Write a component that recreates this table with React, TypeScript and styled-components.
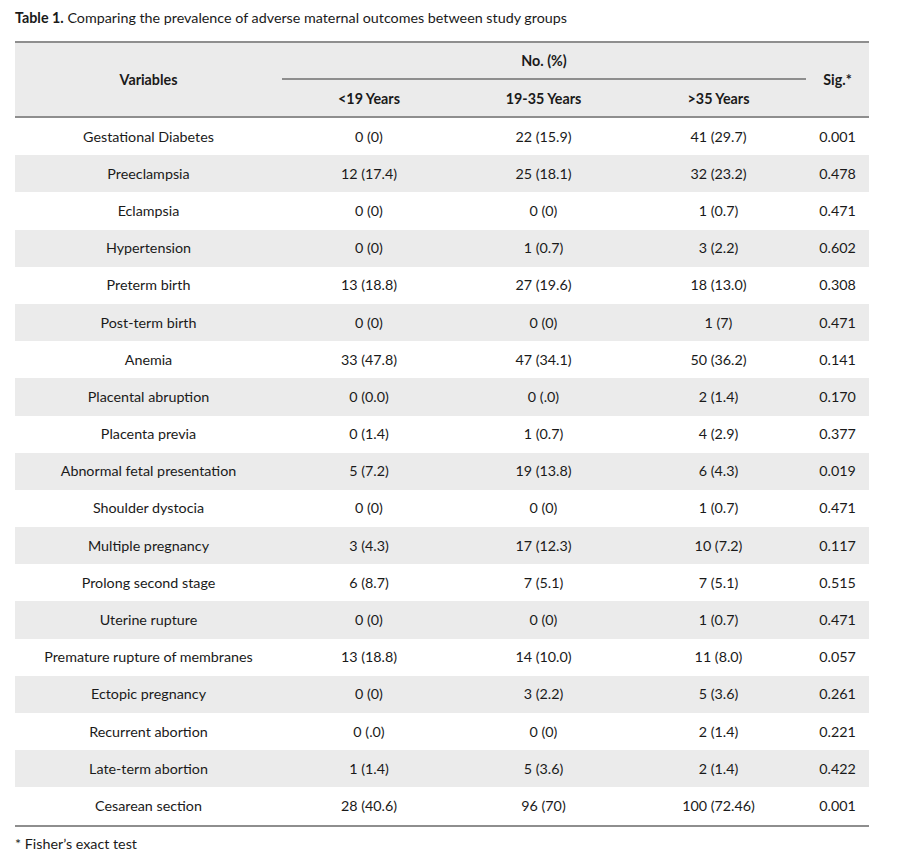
import React from 'react';
import styled, { createGlobalStyle } from 'styled-components';

const GlobalStyle = createGlobalStyle`
  body {
    margin: 0;
    background: #fff;
    font-family: Lato, "Open Sans", sans-serif;
    color: #1a1a1a;
  }
`;

const Page = styled.div`
  width: 900px;
  height: 860px;
  padding: 9px 31px 0 15px;
  box-sizing: border-box;
`;

const Caption = styled.div`
  font-size: 14.3px;
  line-height: 18px;
  margin-bottom: 14px;
`;

const CaptionLabel = styled.span`
  font-weight: 700;
`;

const Table = styled.table`
  width: 854px;
  border-collapse: collapse;
  table-layout: fixed;
  font-size: 14.3px;
  border-top: 2px solid #8e8e8e;
  border-bottom: 2px solid #8e8e8e;
`;

const Head = styled.thead`
  background: #ebebeb;
  border-bottom: 2px solid #8e8e8e;
`;

const HeadCell = styled.th<{ $rule?: boolean }>`
  font-weight: 700;
  text-align: center;
  padding: 0;
  height: ${(p) => (p.$rule ? '35px' : '36px')};
  border-bottom: ${(p) => (p.$rule ? '2px solid #8e8e8e' : 'none')};
`;

const Row = styled.tr<{ $shade: boolean }>`
  background: ${(p) => (p.$shade ? '#ebebeb' : '#fff')};
`;

const Cell = styled.td`
  text-align: center;
  padding: 0 0 1px;
  height: 36.2px;
`;

const Note = styled.div`
  font-size: 14.3px;
  line-height: 18px;
  margin-top: 8px;
`;

const rows: [string, string, string, string, string][] = [
  ['Gestational Diabetes', '0 (0)', '22 (15.9)', '41 (29.7)', '0.001'],
  ['Preeclampsia', '12 (17.4)', '25 (18.1)', '32 (23.2)', '0.478'],
  ['Eclampsia', '0 (0)', '0 (0)', '1 (0.7)', '0.471'],
  ['Hypertension', '0 (0)', '1 (0.7)', '3 (2.2)', '0.602'],
  ['Preterm birth', '13 (18.8)', '27 (19.6)', '18 (13.0)', '0.308'],
  ['Post-term birth', '0 (0)', '0 (0)', '1 (7)', '0.471'],
  ['Anemia', '33 (47.8)', '47 (34.1)', '50 (36.2)', '0.141'],
  ['Placental abruption', '0 (0.0)', '0 (.0)', '2 (1.4)', '0.170'],
  ['Placenta previa', '0 (1.4)', '1 (0.7)', '4 (2.9)', '0.377'],
  ['Abnormal fetal presentation', '5 (7.2)', '19 (13.8)', '6 (4.3)', '0.019'],
  ['Shoulder dystocia', '0 (0)', '0 (0)', '1 (0.7)', '0.471'],
  ['Multiple pregnancy', '3 (4.3)', '17 (12.3)', '10 (7.2)', '0.117'],
  ['Prolong second stage', '6 (8.7)', '7 (5.1)', '7 (5.1)', '0.515'],
  ['Uterine rupture', '0 (0)', '0 (0)', '1 (0.7)', '0.471'],
  ['Premature rupture of membranes', '13 (18.8)', '14 (10.0)', '11 (8.0)', '0.057'],
  ['Ectopic pregnancy', '0 (0)', '3 (2.2)', '5 (3.6)', '0.261'],
  ['Recurrent abortion', '0 (.0)', '0 (0)', '2 (1.4)', '0.221'],
  ['Late-term abortion', '1 (1.4)', '5 (3.6)', '2 (1.4)', '0.422'],
  ['Cesarean section', '28 (40.6)', '96 (70)', '100 (72.46)', '0.001'],
];

const App: React.FC = () => {
  return (
    <Page>
      <GlobalStyle />
      <Caption>
        <CaptionLabel>Table 1.</CaptionLabel> Comparing the prevalence of adverse maternal outcomes between study groups
      </Caption>
      <Table>
        <colgroup>
          <col style={{ width: 267 }} />
          <col style={{ width: 174 }} />
          <col style={{ width: 175 }} />
          <col style={{ width: 175 }} />
          <col style={{ width: 63 }} />
        </colgroup>
        <Head>
          <tr>
            <HeadCell rowSpan={2}>Variables</HeadCell>
            <HeadCell colSpan={3} $rule>No. (%)</HeadCell>
            <HeadCell rowSpan={2}>Sig.*</HeadCell>
          </tr>
          <tr>
            <HeadCell>&lt;19 Years</HeadCell>
            <HeadCell>19-35 Years</HeadCell>
            <HeadCell>&gt;35 Years</HeadCell>
          </tr>
        </Head>
        <tbody>
          {rows.map((r, i) => (
            <Row key={r[0]} $shade={i % 2 === 1}>
              {r.map((v, j) => (
                <Cell key={j}>{v}</Cell>
              ))}
            </Row>
          ))}
        </tbody>
      </Table>
      <Note>* Fisher’s exact test</Note>
    </Page>
  );
};

export default App;
